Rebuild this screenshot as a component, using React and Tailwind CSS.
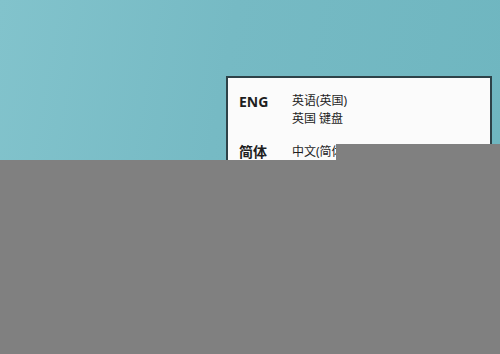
export default function App() {
  return (
    <div className="relative h-[354px] w-[500px] overflow-hidden bg-[#808080] font-['Noto_Sans','Noto_Sans_CJK_SC',sans-serif]">
      <div className="h-[160px] overflow-hidden bg-[linear-gradient(100deg,#82c3cc_0%,#76bac4_45%,#6fb6c0_100%)] pt-[76px] pl-[226px] pr-[8px]">
        <div className="h-[100px] border-2 border-b-0 border-[#2e4248] bg-[#fbfbfb] pl-[11px] pt-[14px] text-[#1e1e1e]">
          <div className="flex">
            <div className="w-[53px] text-[14px] font-bold leading-[20px]">ENG</div>
            <div className="text-[12px] leading-[18px]">
              <div>英语(英国)</div>
              <div>英国 键盘</div>
            </div>
          </div>
          <div className="mt-[14px] flex">
            <div className="w-[53px] text-[14px] font-bold leading-[20px]">简体</div>
            <div className="text-[12px] leading-[20px]">中文(简体)</div>
          </div>
        </div>
      </div>
      <div className="absolute left-[336px] top-[144px] h-[16px] w-[164px] bg-[#808080]" />
    </div>
  )
}
